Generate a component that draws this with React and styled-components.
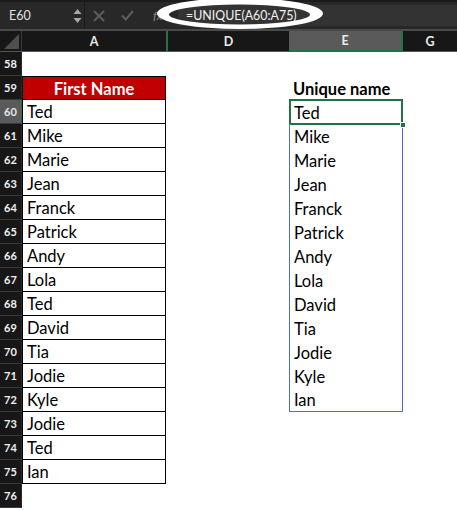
import React from 'react';
import styled, { createGlobalStyle } from 'styled-components';

const GlobalStyle = createGlobalStyle`
  html, body { margin: 0; padding: 0; background: #ffffff; overflow: hidden; }
  * { box-sizing: border-box; }
`;

const Screen = styled.div`
  position: relative;
  width: 457px;
  height: 510px;
  overflow: hidden;
  background: #ffffff;
  font-family: Lato, "Liberation Sans", sans-serif;
`;

const TopBar = styled.div`
  display: flex;
  align-items: stretch;
  height: 31px;
  background: #282828;
  border-top: 2px solid #1b1b1b;
  border-bottom: 2px solid #4a4a4a;
`;

const NameBox = styled.div`
  width: 70px;
  padding-left: 9px;
  display: flex;
  align-items: center;
  color: #e2e2e2;
  font-size: 12.5px;
`;

const Spinner = styled.div`
  width: 14px;
  display: flex;
  align-items: center;
  justify-content: center;
`;

const Divider = styled.div`
  width: 1px;
  background: #1a1a1a;
`;

const IconButton = styled.div`
  width: 28px;
  display: flex;
  align-items: center;
  justify-content: center;
`;

const FxLabel = styled.div`
  width: 37px;
  display: flex;
  align-items: center;
  padding-left: 12px;
  color: #8a8a8a;
  font-style: italic;
  font-size: 12px;
`;

const FormulaBox = styled.div`
  flex: 1;
  margin: 3px 0 3px;
  padding-left: 8px;
  display: flex;
  align-items: center;
  background: #333333;
  color: #f2f2f2;
  font-size: 12.4px;
`;

const Annotation = styled.svg`
  position: absolute;
  left: 0;
  top: 0;
  pointer-events: none;
`;

const GridRow = styled.div`
  display: grid;
  grid-template-columns: 22px 144px 123px 114px 1fr;
  height: ${(p) => (p.$head ? 21 : 24)}px;
  background: ${(p) => (p.$head ? '#171717' : '#ffffff')};
  border-bottom: ${(p) => (p.$head ? '1px solid #555' : 'none')};
`;

const Corner = styled.div`
  display: flex;
  align-items: flex-end;
  justify-content: flex-end;
  padding: 0 2px 2px 0;
  border-right: 1px solid #3a3a3a;
`;

const ColHead = styled.div`
  display: flex;
  align-items: center;
  justify-content: center;
  color: #ececec;
  font-size: 12.5px;
  font-weight: 700;
  background: ${(p) => (p.$active ? '#5a5a5a' : 'transparent')};
  border-bottom: ${(p) => (p.$active ? '2px solid #217346' : 'none')};
  border-right: ${(p) => (p.$active ? '2px solid #217346' : 'none')};
  border-left: ${(p) => (p.$mark ? '2px solid #217346' : 'none')};
  margin-bottom: ${(p) => (p.$active ? '-1px' : '0')};
`;

const RowHead = styled.div`
  display: flex;
  align-items: center;
  justify-content: center;
  background: ${(p) => (p.$active ? '#5a5a5a' : '#171717')};
  color: ${(p) => (p.$active ? '#e6e6e6' : '#f0f0f0')};
  font-size: 11px;
  font-weight: 700;
  border-bottom: 1px solid #3a3a3a;
  border-right: ${(p) => (p.$active ? '1px solid #217346' : '1px solid #2a2a2a')};
`;

const ACell = styled.div`
  display: flex;
  align-items: center;
  justify-content: ${(p) => (p.$variant === 'header' ? 'center' : 'flex-start')};
  padding-left: ${(p) => (p.$variant === 'header' ? '0' : '4px')};
  padding-top: 1px;
  font-size: 16.5px;
  font-weight: ${(p) => (p.$variant === 'header' ? 700 : 400)};
  color: ${(p) => (p.$variant === 'header' ? '#ffffff' : '#000000')};
  background: ${(p) => (p.$variant === 'header' ? '#c00000' : '#ffffff')};
  border-left: ${(p) => (p.$variant ? '1px solid #000' : 'none')};
  border-right: ${(p) => (p.$variant ? '1px solid #000' : 'none')};
  border-bottom: ${(p) => (p.$variant ? '1px solid #000' : 'none')};
  border-top: ${(p) => (p.$variant === 'header' ? '1px solid #000' : 'none')};
`;

const Blank = styled.div`
  background: #ffffff;
`;

const ECell = styled.div`
  position: relative;
  display: flex;
  align-items: center;
  padding-left: 4px;
  padding-top: 1px;
  font-size: 16.5px;
  font-weight: ${(p) => (p.$bold ? 700 : 400)};
  color: #000;
  border-left: ${(p) => (p.$spill ? '1px solid #4472c4' : 'none')};
  border-right: ${(p) => (p.$spill ? '1px solid #4472c4' : 'none')};
  border-bottom: ${(p) => (p.$last ? '1px solid #4472c4' : 'none')};
  &::after {
    content: '';
    display: ${(p) => (p.$selected ? 'block' : 'none')};
    position: absolute;
    left: -1px;
    top: -1px;
    right: -1px;
    bottom: -1px;
    border: 2px solid #217346;
  }
`;

const Handle = styled.span`
  position: absolute;
  right: -4px;
  bottom: -4px;
  width: 6px;
  height: 6px;
  background: #217346;
  border: 1px solid #ffffff;
  z-index: 2;
`;

const names = ['Ted', 'Mike', 'Marie', 'Jean', 'Franck', 'Patrick', 'Andy', 'Lola', 'Ted', 'David', 'Tia', 'Jodie', 'Kyle', 'Jodie', 'Ted', 'Ian'];
const unique = ['Ted', 'Mike', 'Marie', 'Jean', 'Franck', 'Patrick', 'Andy', 'Lola', 'David', 'Tia', 'Jodie', 'Kyle', 'Ian'];

const rows = [];
for (let r = 58; r <= 76; r++) rows.push(r);

function aFor(r) {
  if (r === 59) return { variant: 'header', text: 'First Name' };
  if (r >= 60 && r <= 75) return { variant: 'item', text: names[r - 60] };
  return { variant: undefined, text: '' };
}

function eFor(r) {
  if (r === 59) return { text: 'Unique name', bold: true };
  if (r >= 60 && r <= 72) return { text: unique[r - 60], spill: true, last: r === 72, selected: r === 60 };
  return { text: '' };
}

export default function App() {
  return (
    <Screen>
      <GlobalStyle />
      <TopBar>
        <NameBox>E60</NameBox>
        <Spinner>
          <svg width="9" height="18" viewBox="0 0 9 18">
            <path d="M4.5 2 L8.5 7 L0.5 7 Z" fill="#a8a8a8" />
            <path d="M0.5 11 L8.5 11 L4.5 16 Z" fill="#a8a8a8" />
          </svg>
        </Spinner>
        <Divider />
        <IconButton>
          <svg width="12" height="12" viewBox="0 0 12 12">
            <path d="M1 1 L11 11 M11 1 L1 11" stroke="#5c5c5c" strokeWidth="2" />
          </svg>
        </IconButton>
        <IconButton>
          <svg width="13" height="11" viewBox="0 0 13 11">
            <path d="M1 5.5 L4.8 9.5 L12 1" stroke="#5c5c5c" strokeWidth="2" fill="none" />
          </svg>
        </IconButton>
        <FxLabel>fx</FxLabel>
        <FormulaBox>=UNIQUE(A60:A75)</FormulaBox>
      </TopBar>
      <Annotation width="457" height="31" viewBox="0 0 457 31">
        <path
          fillRule="evenodd"
          fill="#ffffff"
          d="M157 13.5 a83 15.5 0 1 0 166 0 a83 15.5 0 1 0 -166 0 Z M169 14.5 a70.5 10 0 1 0 141 0 a70.5 10 0 1 0 -141 0 Z"
        />
      </Annotation>
      <GridRow $head>
        <Corner>
          <svg width="15" height="15" viewBox="0 0 15 15">
            <path d="M15 0 L15 15 L0 15 Z" fill="#4f4f4f" />
          </svg>
        </Corner>
        <ColHead>A</ColHead>
        <ColHead $mark>D</ColHead>
        <ColHead $active>E</ColHead>
        <ColHead>G</ColHead>
      </GridRow>
      {rows.map((r) => {
        const a = aFor(r);
        const e = eFor(r);
        return (
          <GridRow key={r}>
            <RowHead $active={r === 60}>{r}</RowHead>
            <ACell $variant={a.variant}>{a.text}</ACell>
            <Blank />
            <ECell $bold={e.bold} $spill={e.spill} $last={e.last} $selected={e.selected}>
              {e.text}
              {e.selected && <Handle />}
            </ECell>
            <Blank />
          </GridRow>
        );
      })}
    </Screen>
  );
}
